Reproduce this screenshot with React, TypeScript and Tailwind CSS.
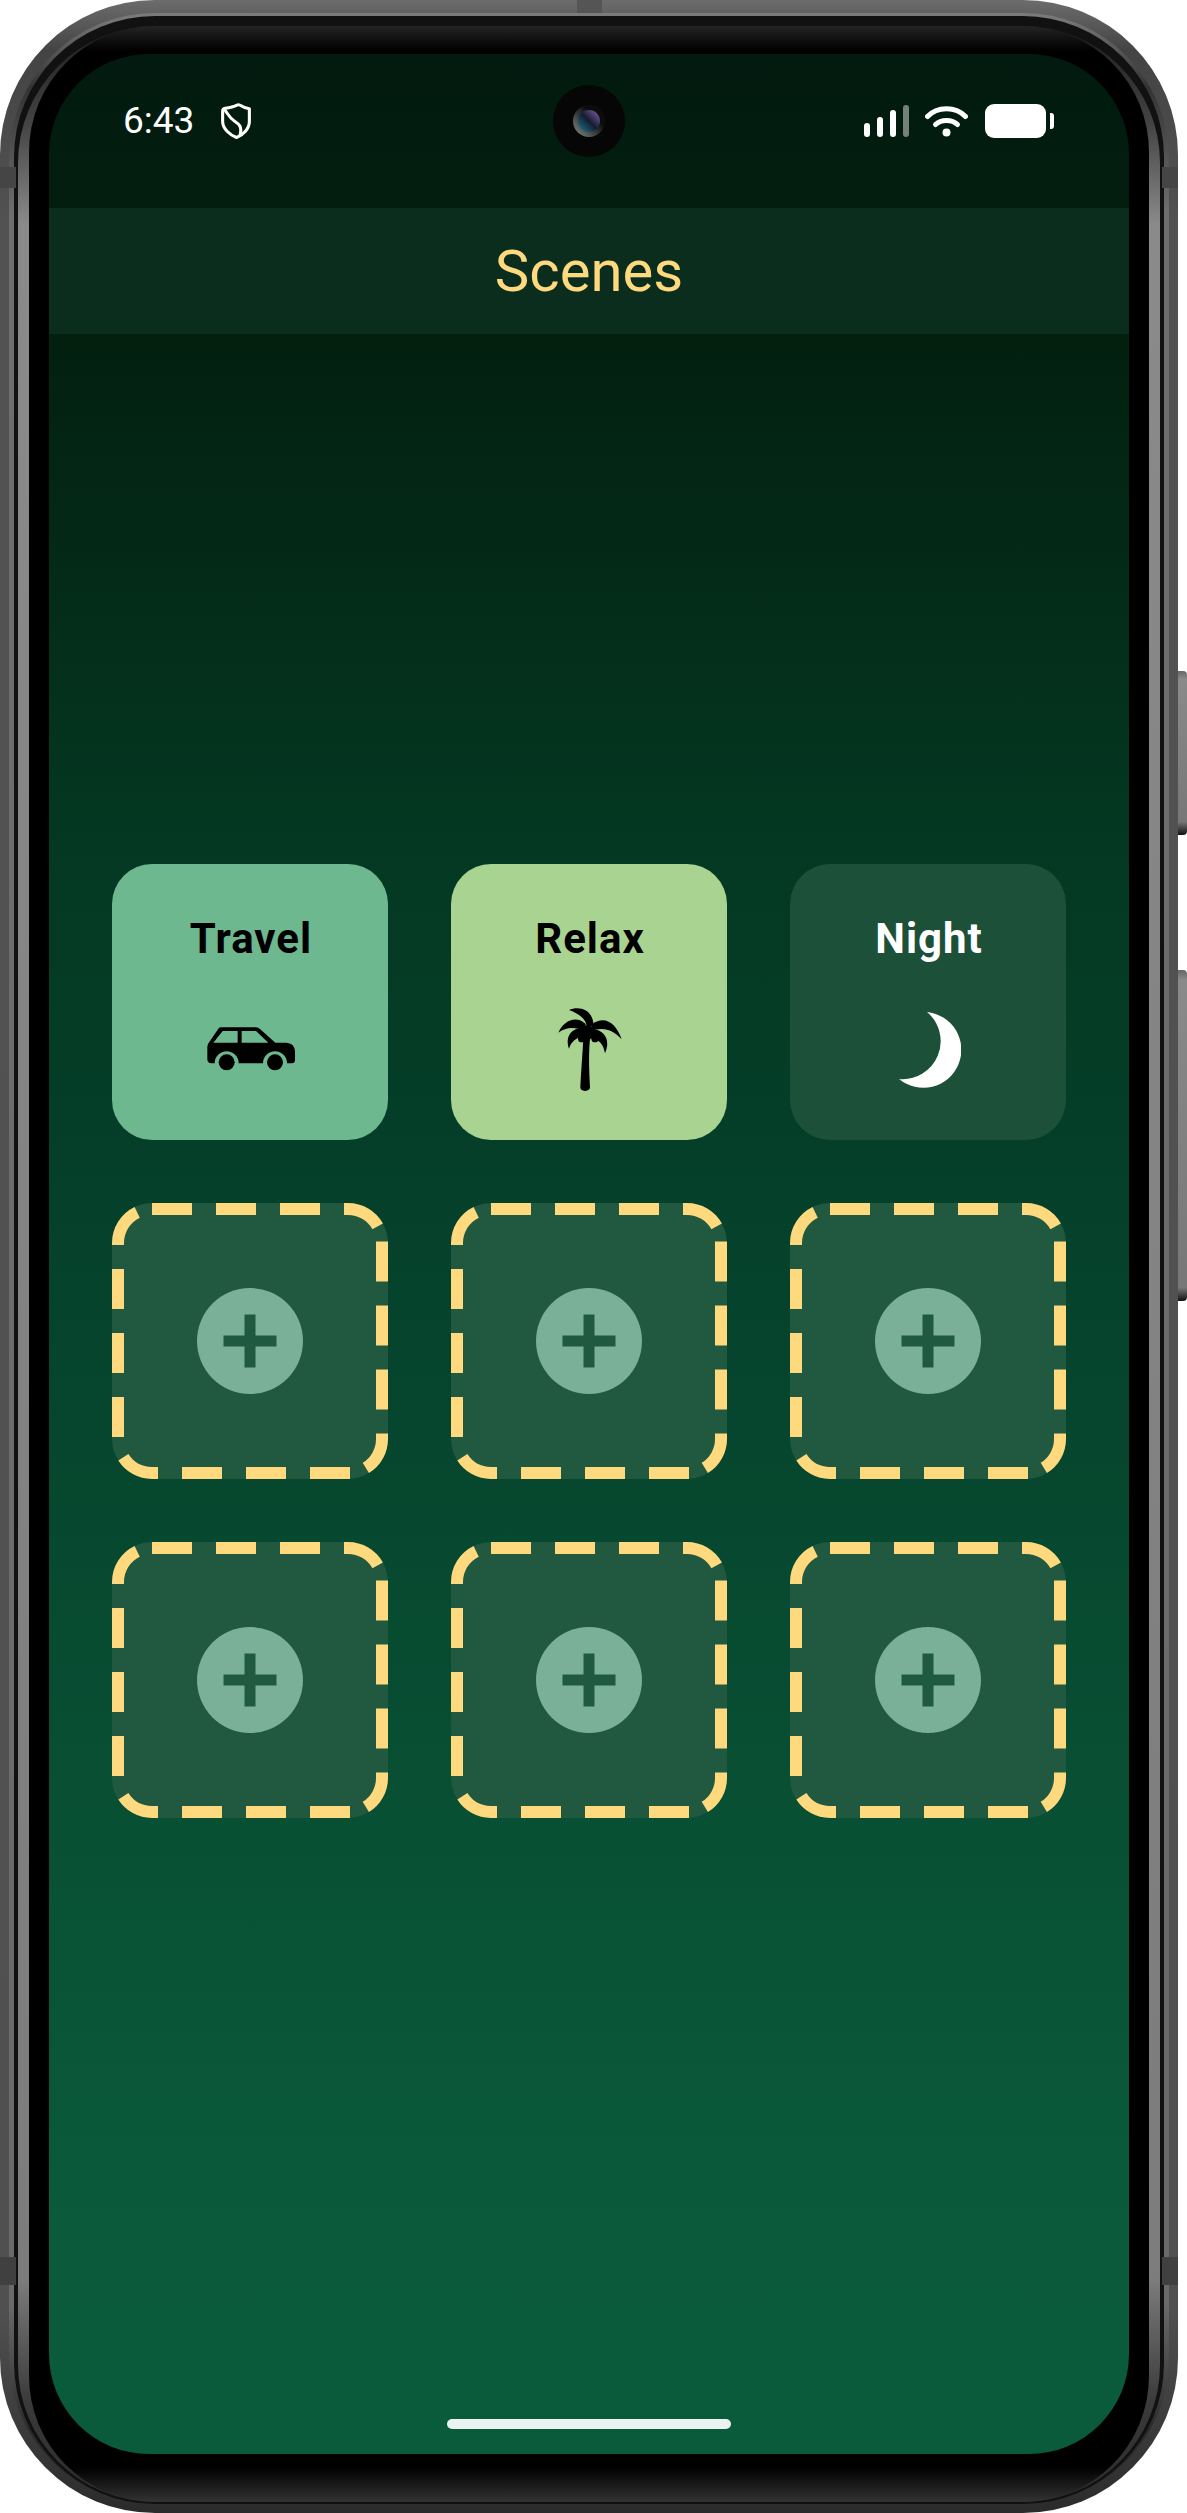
import React from 'react';

const DashedBorder: React.FC = () => (
    <svg className="absolute inset-0 h-full w-full" viewBox="0 0 276 276" fill="none" stroke="#ffd97d" strokeWidth="12" strokeDasharray="40 24">
        <path d="M40 6H236A34 34 0 0 1 270 40" />
        <path d="M270 38.6V236A34 34 0 0 1 236 270" />
        <path d="M238 270H40A34 34 0 0 1 6 236" />
        <path d="M6 234V40A34 34 0 0 1 40 6" />
    </svg>
);

const CarIcon = () => (
    <svg width="100" height="60" viewBox="0 0 300 180" fill="#000">
        <path
            fillRule="evenodd"
            d="M62 22H168Q175 22 180 27L226 68H258Q285 70 285 95V120Q285 130 275 130H261A36 36 0 0 0 189 130H116A36 36 0 0 0 44 130H35Q22 130 22 118V80Q22 72 28 66L54 28Q57 22 62 22ZM68 33L40 68H113V33ZM125 33V68H205L168 33Z"
        />
        <circle cx="80" cy="127" r="24" />
        <circle cx="225" cy="127" r="24" />
    </svg>
);

const PalmIcon = () => (
    <svg className="ml-[2px]" width="90" height="100" viewBox="0 0 270 300" fill="#000">
        <path d="M115 115C112 170 108 220 106 262Q106 272 120 273Q135 272 135 262C133 220 130 170 135 115Z" />
        <path d="M72 30C100 18 144 25 146 78L125 80C125 58 100 40 72 30Z" />
        <path d="M40 98C55 62 94 44 122 72L118 94C90 80 65 80 40 98Z" />
        <path d="M230 118C215 72 180 44 142 72L136 94C175 78 205 90 230 118Z" />
        <path d="M112 84C78 85 60 110 72 146C80 124 92 114 116 108Z" />
        <path d="M135 88C177 85 199 120 180 160C175 134 165 118 132 112Z" />
        <ellipse cx="125" cy="98" rx="26" ry="22" />
        <circle cx="110" cy="116" r="11" />
        <circle cx="150" cy="116" r="11" />
    </svg>
);

const MoonIcon = () => (
    <svg className="ml-[3px]" width="62" height="76" viewBox="0 0 62 76" fill="#fff">
        <path d="M28 0A38 38 0 1 1 0 67A38 38 0 0 0 28 0Z" />
    </svg>
);

type Scene = { name: string; bg: string; text: string; icon: React.ReactNode };

const scenes: Scene[] = [
    { name: 'Travel', bg: 'bg-[#6eb890]', text: 'text-black', icon: <CarIcon /> },
    { name: 'Relax', bg: 'bg-[#a9d390]', text: 'text-black', icon: <PalmIcon /> },
    { name: 'Night', bg: 'bg-[#1c5038]', text: 'text-white', icon: <MoonIcon /> },
];

const EmptySlot = () => (
    <div className="relative flex h-[276px] items-center justify-center rounded-[40px] bg-[#20593f]">
        <DashedBorder />
        <div className="flex h-[106px] w-[106px] items-center justify-center rounded-full bg-[#7ab097]">
            <svg width="54" height="54" viewBox="0 0 54 54" fill="#1f5a40">
                <rect x="0.5" y="21.5" width="53" height="11" />
                <rect x="21.5" y="0.5" width="11" height="53" />
            </svg>
        </div>
    </div>
);

const StatusBar = () => (
    <div className="grid h-[154px] grid-cols-[1fr_72px_1fr] items-center pb-[20px] pl-[74px] pr-[75px] text-white">
        <div className="flex items-center gap-[26px]">
            <span className="text-[37px] leading-[42px]">6:43</span>
            <svg width="32" height="36" viewBox="0 0 30 35" fill="none" stroke="#fff" strokeWidth="3" strokeLinejoin="round" strokeLinecap="round">
                <path d="M18.5 2C21.5 4 25 5 28 5.5V18C28 25 22 31 15.5 33.5C9 31 2 25 2 18V8C2 6.5 3 5.5 4.5 5.2C9 4.5 13 3.5 16 2Q17.5 1.3 18.5 2Z" />
                <path d="M4 6.5C8 12 9 15 14 18C18 20.5 21 23 19 31" />
            </svg>
        </div>
        {/* Camera punch hole */}
        <div className="flex h-[72px] w-[72px] items-center justify-center rounded-full bg-[#060606]">
            <div className="flex h-[32px] w-[32px] items-center justify-center rounded-full bg-[linear-gradient(225deg,#0c0c0c_35%,#8a8f8e_100%)]">
                <div className="h-[22px] w-[22px] rounded-full bg-[linear-gradient(45deg,#1f7e92_0%,#141c30_50%,#8a62b0_100%)]" />
            </div>
        </div>
        <div className="flex items-center justify-end">
            <div className="flex items-end gap-[6.5px]">
                <div className="h-[14px] w-[6.5px] rounded-full bg-white" />
                <div className="h-[20px] w-[6.5px] rounded-full bg-white" />
                <div className="h-[27px] w-[6.5px] rounded-full bg-white" />
                <div className="h-[32px] w-[6.5px] rounded-full bg-white/45" />
            </div>
            <svg className="ml-[16px]" width="43" height="32" viewBox="0 0 43 32" fill="none" stroke="#fff" strokeWidth="5" strokeLinecap="round">
                <path d="M2.5 11.5C12 1 31 1 40.5 11.5" />
                <path d="M10.5 19.5C16 14 27 14 32.5 19.5" />
                <circle cx="21.5" cy="27.5" r="4" fill="#fff" stroke="none" />
            </svg>
            <div className="ml-[17px] h-[34px] w-[61px] rounded-[9px] bg-white" />
            <div className="ml-[4px] h-[16px] w-[4px] rounded-r-[3px] bg-white" />
        </div>
    </div>
);

const App: React.FC = () => {
    return (
        <div className="h-[2513px] w-[1187px] overflow-hidden bg-white font-['Roboto',sans-serif]">
            <div className="relative w-[1178px]">
                {/* Phone body, built up in layers from the outer edge inward */}
                <div className="rounded-[155px] bg-[linear-gradient(180deg,#6c6c6c_0%,#444444_2%,#525252_9%,#505050_92%,#2b2b2b_100%)] px-[9px] pb-[9px] pt-[13px]">
                    <div className="rounded-[146px] bg-[linear-gradient(180deg,#7c7c7c_0%,#333333_3%,#6e6e6e_8%,#6a6a6a_92%,#2b2b2b_97%)] px-[5px] pt-[3px]">
                        <div className="rounded-[141px] bg-[#111111] px-[4px] pb-[2px] pt-[10px]">
                            <div className="rounded-[137px] bg-[linear-gradient(180deg,#1c1c1c_0%,#444444_4%,#8a8a8a_8%,#7c7c7c_91%,#3a3a3a_96%,#2a2a2a_100%)] px-[11px]">
                                <div className="rounded-[126px] bg-[linear-gradient(180deg,#242424_0%,#000000_1%,#000000_98.6%,#333333_100%)] px-[20px] pb-[48px] pt-[28px]">
                                    <div className="flex h-[2400px] flex-col overflow-hidden rounded-[100px] bg-[linear-gradient(180deg,#021a0f_0%,#03200f_12%,#043822_33%,#05402a_47.5%,#0a5a3b_90%,#0a5b3c_100%)]">
                                        <StatusBar />
                                        <div className="flex h-[126px] items-center justify-center bg-[#0b2d1e]">
                                            <h1 className="text-[58px] font-normal leading-none text-[#ffd97d]">Scenes</h1>
                                        </div>
                                        <div className="grid grid-cols-3 gap-[63px] px-[63px] pt-[530px]">
                                            {scenes.map((scene) => (
                                                <div key={scene.name} className={`flex h-[276px] flex-col items-center rounded-[40px] pt-[51px] ${scene.bg} ${scene.text}`}>
                                                    <span className="ml-[2px] text-[42px] font-bold leading-[48px] tracking-[1px]">{scene.name}</span>
                                                    <div className="mt-[37px] flex h-[100px] items-center justify-center">{scene.icon}</div>
                                                </div>
                                            ))}
                                            {[0, 1, 2, 3, 4, 5].map((i) => (
                                                <EmptySlot key={i} />
                                            ))}
                                        </div>
                                        <div className="mx-auto mb-[25px] mt-auto h-[10px] w-[284px] rounded-full bg-[#ebf3f0]" />
                                    </div>
                                </div>
                            </div>
                        </div>
                    </div>
                </div>

                {/* Side buttons and antenna lines sit on top of the body edge */}
                <div className="absolute left-[1178px] top-[671px] h-[164px] w-[9px] rounded-r-[4px] bg-[linear-gradient(180deg,#666666_0%,#8a8a8a_5%,#777777_92%,#111111_100%)]" />
                <div className="absolute left-[1178px] top-[970px] h-[331px] w-[9px] rounded-r-[4px] bg-[linear-gradient(180deg,#666666_0%,#8a8a8a_3%,#777777_96%,#111111_100%)]" />
                <div className="absolute left-[577px] top-0 h-[13px] w-[25px] bg-[#555555]" />
                <div className="absolute left-0 top-[167px] h-[21px] w-[16px] bg-[#454545]" />
                <div className="absolute right-0 top-[167px] h-[21px] w-[16px] bg-[#454545]" />
                <div className="absolute left-0 top-[2257px] h-[28px] w-[16px] bg-[#404040]" />
                <div className="absolute right-0 top-[2257px] h-[28px] w-[16px] bg-[#404040]" />
            </div>
        </div>
    );
};

export default App;
